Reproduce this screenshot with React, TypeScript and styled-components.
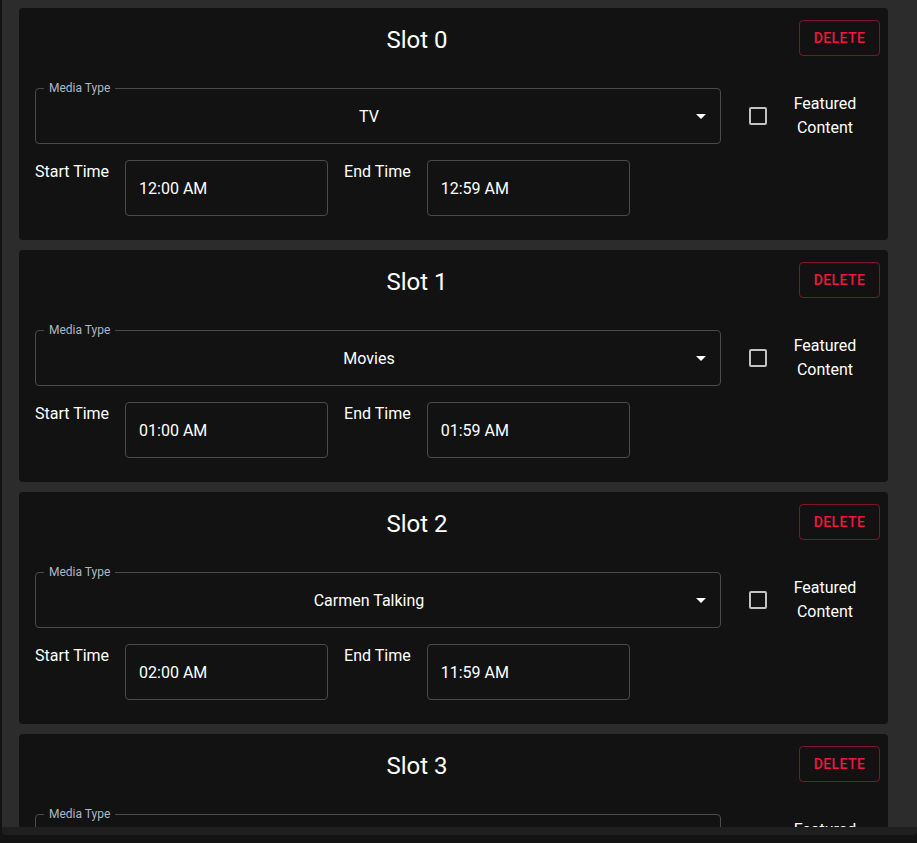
import React from "react";
import styled, { createGlobalStyle } from "styled-components";

const Global = createGlobalStyle`
  html, body { margin: 0; padding: 0; background: #131313; }
  body { font-family: Roboto, "Noto Sans", "Liberation Sans", sans-serif; color: #fff; }
  * { box-sizing: border-box; }
`;

const Shell = styled.div`
  margin-left: 2px;
  height: 835px;
  background: #1f1f1f;
  border-radius: 0 0 4px 4px;
  overflow: hidden;
`;

const Scroller = styled.div`
  height: 827px;
  overflow: hidden;
  background: #2c2c2c;
  padding: 8px 29px 0 17px;
  display: flex;
  flex-direction: column;
  gap: 10px;
`;

const Card = styled.section`
  flex: none;
  background: #121212;
  border-radius: 4px;
  padding: 12px 8px 24px 16px;
  display: flex;
  flex-direction: column;
`;

const Header = styled.div`
  display: flex;
  align-items: center;
  height: 36px;
`;

const Title = styled.h2`
  flex: 1;
  margin: 0;
  text-align: center;
  font-size: 24px;
  font-weight: 400;
  line-height: 36px;
  position: relative;
  top: 2px;
`;

const DeleteButton = styled.button`
  width: 81px;
  height: 36px;
  background: transparent;
  border: 1px solid rgba(242, 22, 62, 0.5);
  border-radius: 4px;
  color: #f2163e;
  font-family: inherit;
  font-size: 14px;
  font-weight: 500;
  letter-spacing: 0.4px;
  text-transform: uppercase;
  padding: 0;
  cursor: pointer;
`;

const MediaRow = styled.div`
  display: flex;
  align-items: center;
  margin-top: 32px;
`;

const Outlined = styled.div<{ $width: number }>`
  position: relative;
  width: ${(p) => p.$width}px;
  height: 56px;
  border: 1px solid #4b4b4b;
  border-radius: 4px;
  display: flex;
  align-items: center;
  flex: none;
`;

const FloatLabel = styled.span`
  position: absolute;
  left: 8px;
  top: -9px;
  padding: 0 5px;
  background: #121212;
  font-size: 12px;
  line-height: 16px;
  color: #aeb7c6;
`;

const SelectValue = styled.div`
  flex: 1;
  padding: 0 32px 0 14px;
  text-align: center;
  font-size: 16px;
`;

const Arrow = styled.svg`
  position: absolute;
  right: 7px;
  top: 15px;
  width: 24px;
  height: 24px;
  fill: #fff;
`;

const CheckBox = styled.span`
  margin-left: 28px;
  width: 18px;
  height: 18px;
  border: 2px solid #c2c2c2;
  border-radius: 2px;
  flex: none;
`;

const CheckLabel = styled.div`
  margin-left: 18px;
  width: 80px;
  text-align: center;
  font-size: 16px;
  line-height: 24px;
`;

const TimeRow = styled.div`
  display: flex;
  align-items: flex-start;
  gap: 16px;
  margin-top: 16px;
`;

const TimeLabel = styled.div`
  font-size: 16px;
  line-height: 24px;
  white-space: nowrap;
`;

const TimeValue = styled.div`
  padding-left: 13px;
  font-size: 16px;
`;

type Slot = { media: string; start: string; end: string };

const slots: Slot[] = [
  { media: "TV", start: "12:00 AM", end: "12:59 AM" },
  { media: "Movies", start: "01:00 AM", end: "01:59 AM" },
  { media: "Carmen Talking", start: "02:00 AM", end: "11:59 AM" },
  { media: "TV", start: "12:00 PM", end: "12:59 PM" },
];

function SlotCard({ index, slot }: { index: number; slot: Slot }) {
  return (
    <Card>
      <Header>
        <Title>Slot {index}</Title>
        <DeleteButton>Delete</DeleteButton>
      </Header>
      <MediaRow>
        <Outlined $width={686}>
          <FloatLabel>Media Type</FloatLabel>
          <SelectValue>{slot.media}</SelectValue>
          <Arrow viewBox="0 0 24 24">
            <path d="M7 10l5 5 5-5z" />
          </Arrow>
        </Outlined>
        <CheckBox />
        <CheckLabel>
          Featured
          <br />
          Content
        </CheckLabel>
      </MediaRow>
      <TimeRow>
        <TimeLabel>Start Time</TimeLabel>
        <Outlined $width={203}>
          <TimeValue>{slot.start}</TimeValue>
        </Outlined>
        <TimeLabel>End Time</TimeLabel>
        <Outlined $width={203}>
          <TimeValue>{slot.end}</TimeValue>
        </Outlined>
      </TimeRow>
    </Card>
  );
}

export default function App() {
  return (
    <>
      <Global />
      <Shell>
        <Scroller>
          {slots.map((s, i) => (
            <SlotCard key={i} index={i} slot={s} />
          ))}
        </Scroller>
      </Shell>
    </>
  );
}
